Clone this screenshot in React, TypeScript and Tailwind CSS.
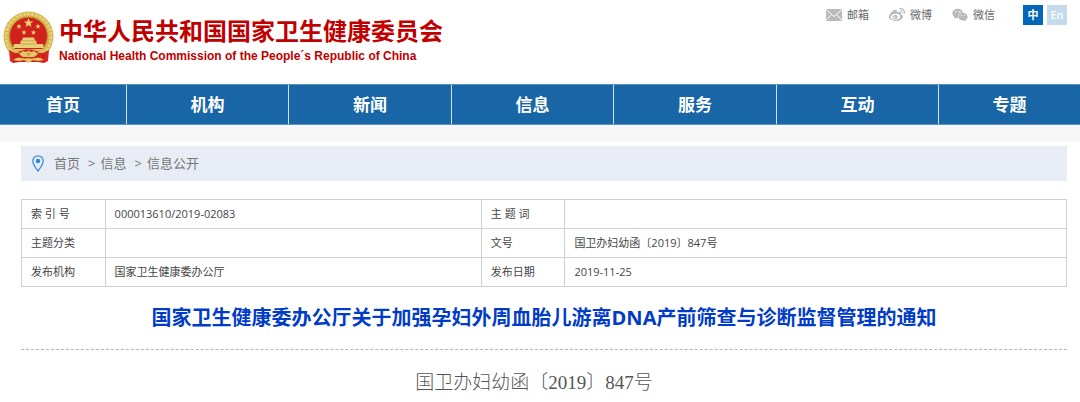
import type { ReactNode } from 'react';
import { FaWeibo, FaWeixin } from 'react-icons/fa';

const navItems = ['首页', '机构', '新闻', '信息', '服务', '互动', '专题'];

const crumbs = ['首页', '信息', '信息公开'];

const rows = [
  ['索 引 号', '000013610/2019-02083', '主 题 词', ''],
  ['主题分类', '', '文号', '国卫办妇幼函〔2019〕847号'],
  ['发布机构', '国家卫生健康委办公厅', '发布日期', '2019-11-25'],
];

const STAR = 'M0 -1L.25 -.32L.95 -.31L.39 .12L.59 .81L0 .4L-.59 .81L-.39 .12L-.95 -.31L-.25 -.32Z';

function Emblem() {
  return (
    <svg viewBox="0 0 52 54" className="w-[52px] h-[54px] flex-shrink-0" aria-hidden="true">
      {/* Gold wreath */}
      <circle cx="25.500" cy="25.500" r="25" fill="#d3b44a" />
      <circle cx="25.500" cy="25.500" r="22.500" fill="none" stroke="#e6cf76" strokeWidth="3" strokeDasharray="3 1" />
      <circle cx="25.500" cy="25" r="19" fill="#d0211c" stroke="#bd9733" strokeWidth="1" />
      {/* Red drapery below the wreath */}
      <path d="M6 39L7 50L10 52L16 51H35L41 52L45 50L46 39L40 42H12Z" fill="#d9251f" />
      <path d="M11 43V51M15 44V51M36 44V51M40 43V51" stroke="#b01a16" strokeWidth="1" />
      {/* Stars */}
      <g fill="#f0d878">
        <path d={STAR} transform="translate(25.500 12) scale(5)" />
        <path d={STAR} transform="translate(16 15.500) scale(2.800)" />
        <path d={STAR} transform="translate(35 15.500) scale(2.800)" />
        <path d={STAR} transform="translate(21 21.500) scale(2.800)" />
        <path d={STAR} transform="translate(30.500 21.500) scale(2.800)" />
      </g>
      {/* Gate tower */}
      <path d="M20 26.500H31L32 29.500H33L34 33H40L41 37H10L11 33H17L18 29.500H19Z" fill="#e9cf78" />
      <path d="M19 29.800H32M17 33H34" stroke="#c09735" strokeWidth=".7" />
      {/* Ribbon and cogwheel */}
      <path d="M10 38H41L38 41L33 40L29 38.500H22L18 40L13 41Z" fill="#dcbf57" />
      <path d="M16 43L20 40L23 41L25.500 39.500L28 41L31 40L35 43L31 46H20Z" fill="#e2c765" />
      <circle cx="25.500" cy="43" r="1.500" fill="#cc9c35" />
      <path d="M10 49C16 44 21 49 25.500 47C30 49 35 44 41 49L35 50L30 49L25.500 52L21 49L16 50Z" fill="#e2c765" />
    </svg>
  );
}

function MailIcon() {
  return (
    <svg viewBox="0 0 16 12" className="w-4 h-3" aria-hidden="true">
      <rect width="16" height="12" fill="#bababa" />
      <path d="M0 .5L8 7.500L16 .5M0 11.500L5.500 5.500M16 11.500L10.500 5.500" fill="none" stroke="#fff" strokeWidth="1" />
    </svg>
  );
}

function PinIcon() {
  return (
    <svg viewBox="0 0 12 17" className="w-3 h-[17px]" aria-hidden="true">
      <path d="M6 16C3.500 12.500 .8 9.500 .8 6A5.200 5.200 0 0 1 11.200 6C11.200 9.500 8.500 12.500 6 16Z" fill="none" stroke="#3d8edb" strokeWidth="1.300" />
      <circle cx="6" cy="6" r="2.200" fill="#2f86d8" />
    </svg>
  );
}

function TopLink({ icon, label }: { icon: ReactNode; label: string }) {
  return (
    <a href="#" className="flex items-center gap-[5px] text-[11px] leading-4 text-[#666]">
      <span className="text-[#bababa]">{icon}</span>
      {label}
    </a>
  );
}

export default function App() {
  return (
    <div className="bg-white font-['Open_Sans','Noto_Sans_CJK_SC',sans-serif] text-[#444]">
      <header className="flex justify-between h-[84px] pl-[3px] pr-[13px]">
        <div className="flex items-start gap-1 pt-[11px]">
          <Emblem />
          <div className="text-[#c00000]">
            <div className="font-['Noto_Sans_CJK_SC',sans-serif] text-2xl leading-[38px] font-bold whitespace-nowrap">
              中华人民共和国国家卫生健康委员会
            </div>
            <div className="font-['Liberation_Sans',sans-serif] text-xs leading-[14px] font-bold whitespace-nowrap">
              National Health Commission of the People´s Republic of China
            </div>
          </div>
        </div>

        <div className="flex items-center gap-5 h-5 mt-[5px]">
          <TopLink icon={<MailIcon />} label="邮箱" />
          <TopLink icon={<FaWeibo className="w-4 h-4" />} label="微博" />
          <TopLink icon={<FaWeixin className="w-4 h-4" />} label="微信" />
          <div className="flex gap-1 ml-2 text-[11px] font-semibold text-white">
            <button type="button" className="w-5 h-5 bg-[#0068b7]">中</button>
            <button type="button" className="w-5 h-5 bg-[#c5dbec]">En</button>
          </div>
        </div>
      </header>

      <nav className="grid grid-cols-[127fr_162fr_163fr_162fr_163fr_162fr_141fr] h-[41px] border-y border-[#5b92c1] bg-[#1966a7]">
        {navItems.map((item) => (
          <a
            key={item}
            href="#"
            className="flex items-center justify-center border-r border-white/80 last:border-r-0 text-[17px] font-bold text-white"
          >
            {item}
          </a>
        ))}
      </nav>
      <div className="h-[17px] bg-[#f7f7f7]" />

      <main className="pt-1 pl-[21px] pr-[13px]">
        <div className="flex items-center h-[35px] pl-[11px] bg-[#e8edf5] text-[13px] text-[#777]">
          <PinIcon />
          <div className="flex gap-2 pl-[10px]">
            {crumbs.map((crumb, i) => (
              <span key={crumb} className="flex gap-[5px]">
                {i > 0 && <span>&gt;</span>}
                <a href="#">{crumb}</a>
              </span>
            ))}
          </div>
        </div>

        {/* Document index */}
        <table className="w-full mt-[18px] table-fixed border-collapse text-[11px] leading-4">
          <colgroup>
            <col className="w-[8%]" />
            <col className="w-[36%]" />
            <col className="w-[8%]" />
            <col className="w-[48%]" />
          </colgroup>
          <tbody>
            {rows.map((row) => (
              <tr key={row[0]} className="h-[29px]">
                {row.map((cell, i) =>
                  i % 2 === 0 ? (
                    <th key={i} scope="row" className="border border-[#d0d0d0] pl-[9px] text-left font-normal">
                      {cell}
                    </th>
                  ) : (
                    <td key={i} className="border border-[#d0d0d0] pl-[9px]">
                      {cell}
                    </td>
                  )
                )}
              </tr>
            ))}
          </tbody>
        </table>

        <h1 className="py-4 border-b border-dashed border-[#b5b5b5] text-center text-xl leading-[30px] font-bold text-[#003cc8]">
          国家卫生健康委办公厅关于加强孕妇外周血胎儿游离DNA产前筛查与诊断监督管理的通知
        </h1>
        <p className="pt-[18px] pr-5 text-center font-['Liberation_Serif','Noto_Sans_CJK_SC',serif] text-[19px] leading-[30px] font-light text-[#555]">
          国卫办妇幼函〔2019〕847号
        </p>
      </main>
    </div>
  );
}
